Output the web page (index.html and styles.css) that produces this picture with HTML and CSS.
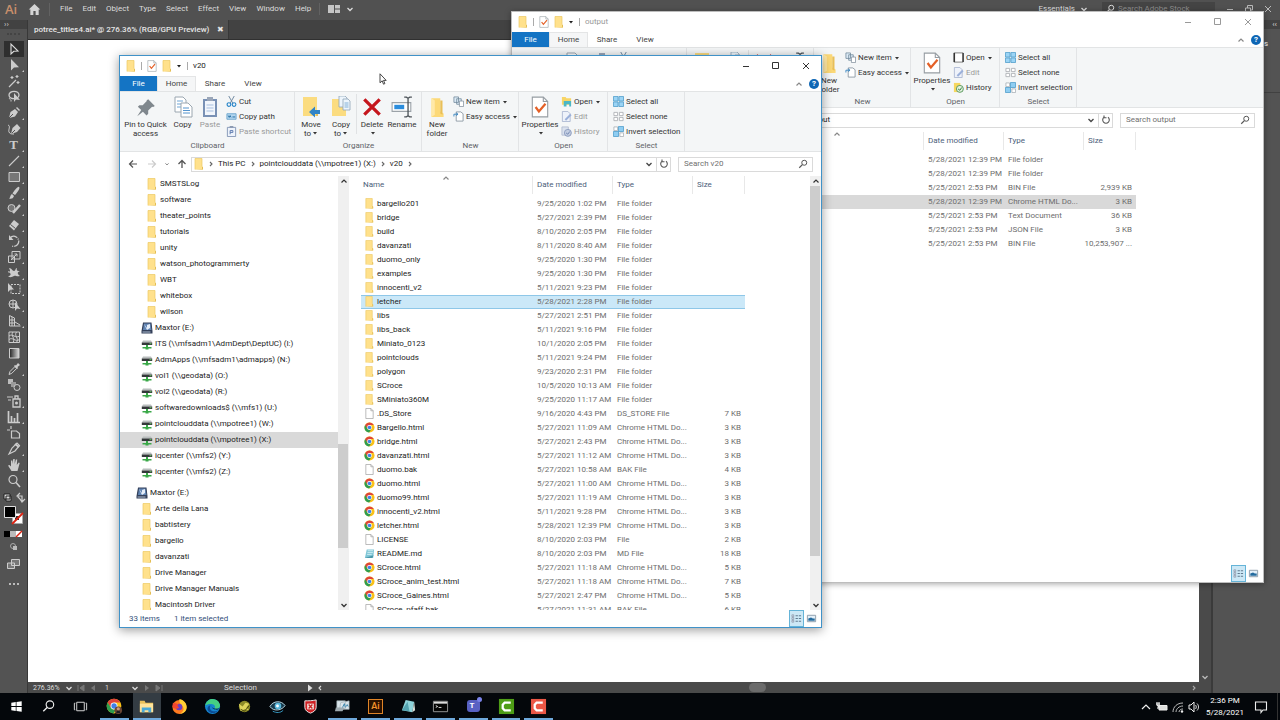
FILE: index.html
```html
<!DOCTYPE html>
<html lang="en">
<head>
<meta charset="utf-8">
<title>Desktop</title>
<link rel="stylesheet" href="styles.css">
</head>
<body>
<svg class="sprite" aria-hidden="true">
  <symbol id="folder" viewBox="0 0 10 12"><path d="M1 0.5h7v8l1 1v2H1z" fill="#ffe18c"/><path d="M1 11.500V.5h7v8" fill="none" stroke="#ecc962" stroke-width=".7"/><path d="M1 11.500h8v-2.300l-1-1v2.800z" fill="#e3bd55"/></symbol>
  <symbol id="file" viewBox="0 0 10 12"><path d="M1 .5h5.500l2.500 2.500v8.500H1z" fill="#fff" stroke="#a2a2a2" stroke-width=".8"/><path d="M6.500.5V3H9" fill="none" stroke="#a2a2a2" stroke-width=".8"/></symbol>
  <symbol id="note" viewBox="0 0 12 12"><path d="M3 1.500h8l-1 9.500H1z" fill="#7fc6d6"/><path d="M4 3h6M3.700 5h6M3.400 7h5" stroke="#d9f2f7" stroke-width=".9"/><path d="M1 11l8-.2 1.500-3" fill="#4a97aa"/></symbol>
  <symbol id="chrome" viewBox="0 0 12 12"><circle cx="6" cy="6" r="5.500" fill="#fbc116"/><path d="M1.200 3.300A5.500 5.500 0 0 1 10.800 3.300H6L3.700 7.400z" fill="#e0443a"/><path d="M1.200 3.300A5.500 5.500 0 0 0 5.600 11.500L8.300 7.300 6 8.700 3.700 7.300z" fill="#2e9d4f"/><circle cx="6" cy="6" r="2.600" fill="#fff"/><circle cx="6" cy="6" r="2" fill="#4080e8"/></symbol>
  <symbol id="drive" viewBox="0 0 12 12"><path d="M2 2.500h8l1.200 2H.8z" fill="#b9bebe"/><path d="M.8 4.500h10.400v2.500H.8z" fill="#34383a"/><path d="M8.500 5.700h2" stroke="#74e66c" stroke-width=".8"/><path d="M5 7h2v2h3.500v1.500H7.500v1h-3v-1h-3V9H5z" fill="#39a847"/></symbol>
  <symbol id="disk" viewBox="0 0 12 12"><path d="M2 .5h8.500l1 8.500v2.500h-11V9z" fill="#34405a"/><path d="M3 1.500h6.500l1 6.500H2z" fill="#6084b3"/><path d="M3 2l3 4V3l3-1v4L6 8z" fill="#e5eefa"/><path d="M1.500 10h8" stroke="#aebdd0"/></symbol>
  <symbol id="check-doc" viewBox="0 0 16 20"><path d="M1 1h10l4 4v14H1z" fill="#fff" stroke="#969da3"/><path d="M11 1v4h4" fill="none" stroke="#969da3"/><path d="M4 10l3 4 6-7" fill="none" stroke="#e46027" stroke-width="2"/></symbol>
  <symbol id="pin" viewBox="0 0 20 20"><path d="M12 3l6 6-1.500 1-1-.3-3.500 3.500v3l-1.500 1.500-3.300-3.300L2 18.500l3.700-5.700L2.600 9.700 4 8.300h3l3.700-3.700L10.500 4z" fill="#7f878d"/></symbol>
  <symbol id="copy" viewBox="0 0 20 22"><path d="M2 1h8l3 3v12H2z" fill="#fff" stroke="#9aa6b0"/><path d="M4 5h6M4 8h6M4 11h6" stroke="#6fa5d5"/><path d="M8 7h7l4 4v10H8z" fill="#fff" stroke="#9aa6b0"/><path d="M10 12h6M10 14.500h7M10 17h7" stroke="#5494ce"/></symbol>
  <symbol id="paste" viewBox="0 0 18 22"><path d="M2 3h14v18H2z" fill="#7991b5"/><path d="M4 5h10v14H4z" fill="#f2f6fc"/><path d="M6 1h6v4H6z" fill="#9aa6b8"/><path d="M5.500 9h7M5.500 12h7M5.500 15h7" stroke="#a7bfdf"/></symbol>
  <symbol id="cut" viewBox="0 0 12 12"><path d="M3 0l4.500 8M9 0L4.500 8" stroke="#67829b" fill="none"/><circle cx="3.200" cy="9.300" r="2" fill="none" stroke="#2584c8" stroke-width="1.200"/><circle cx="8.800" cy="9.300" r="2" fill="none" stroke="#2584c8" stroke-width="1.200"/></symbol>
  <symbol id="copypath" viewBox="0 0 12 12"><path d="M1 3h10v6H1z" fill="#b4d7f0" stroke="#6ba4cd"/><path d="M2.500 5l1 2 1-2 1 2M7 6.500h3" stroke="#19689f" fill="none"/></symbol>
  <symbol id="pastesc" viewBox="0 0 12 12"><path d="M1.500 1.500h9v10h-9z" fill="#eef3fb" stroke="#8295b5"/><path d="M4 0h4v2H4z" fill="#8c9ab2"/><path d="M4.500 9V5h3v2h-3" stroke="#5775ac" fill="none"/></symbol>
  <symbol id="moveto" viewBox="0 0 20 22"><path d="M2 1h14v19H2z" fill="#fbdc80"/><path d="M15 16v4h2v-4z" fill="#e5c05e"/><path d="M8 16l6-5.500v3.500h5v4h-5v3.500z" fill="#3184c6"/></symbol>
  <symbol id="copyto" viewBox="0 0 20 22"><path d="M1 3h14v17H1z" fill="#fbdc80"/><path d="M8 0h6l2 2v9H8z" fill="#edf5fc" stroke="#8fa5b8" stroke-width=".8"/><path d="M12 3h5l2 2v9h-7z" fill="#edf5fc" stroke="#8fa5b8" stroke-width=".8"/><path d="M13.500 7h4M13.500 9h4M13.500 11h4" stroke="#68a0cf" stroke-width=".8"/></symbol>
  <symbol id="delete" viewBox="0 0 20 20"><path d="M3 3l14 14M17 3L3 17" stroke="#c5161d" stroke-width="3"/></symbol>
  <symbol id="rename" viewBox="0 0 20 20"><path d="M1 6h17v8H1z" fill="#fff" stroke="#9ba2a8"/><path d="M3 8h9v4H3z" fill="#2b8ddd"/><path d="M12 1h2l1.500 1L17 1h2M15.500 2v16M12 19h2l1.500-1L17 19h2" fill="none" stroke="#4c5359" stroke-width="1.200"/></symbol>
  <symbol id="bigfolder" viewBox="0 0 16 20"><path d="M3 2h8v12l3 2v3H3z" fill="#fcd978"/><path d="M3 19V2l3 2v13z" fill="#ffe9a8"/><path d="M11 4h2v13l-2-1z" fill="#e9bf58"/></symbol>
  <symbol id="newitem" viewBox="0 0 12 12"><path d="M1 1h5v6H1zM4 3h5v6H4z" fill="#dceaf5" stroke="#698296" stroke-width=".8"/><path d="M7 5.500h4.500v6H7z" fill="#fff" stroke="#7d8c99" stroke-width=".8"/></symbol>
  <symbol id="easy" viewBox="0 0 12 12"><path d="M3.500 1h5l2.500 2v8H3.500z" fill="#fff" stroke="#83909b" stroke-width=".9"/><path d="M1 6V3.500h4M3.500 2L5.500 3.500 3.500 5" fill="none" stroke="#287cbc" stroke-width=".9"/></symbol>
  <symbol id="openf" viewBox="0 0 12 12"><path d="M1 1h4l1 1.500h5v7H1z" fill="#f8d566"/><path d="M3 5.500h8v6H9V9H6v2.500H3z" fill="#4bb7c6"/></symbol>
  <symbol id="openp" viewBox="0 0 12 12"><path d="M1 1h10v10H1z" fill="#fff" stroke="#777"/><path d="M1.500 1v10M11 1v10" stroke="#333" stroke-width="1.500"/></symbol>
  <symbol id="edit" viewBox="0 0 12 12"><path d="M1.500.5h6l2.500 2.500v8.500H1.500z" fill="#eef2fa" stroke="#a6b3ce" stroke-width=".9"/><path d="M4 9l6-6 1.500 1.500-6 6z" fill="#9bb0da"/></symbol>
  <symbol id="history" viewBox="0 0 12 12"><path d="M1 1h7v9H1z" fill="#dbe2ee" stroke="#a9b4cb" stroke-width=".8"/><circle cx="7.500" cy="7.500" r="3.800" fill="#c4cee2" stroke="#8a9abd"/><path d="M5.500 7.500l2 1.500 2-3" stroke="#7084b0" fill="none"/></symbol>
  <symbol id="historyc" viewBox="0 0 12 12"><path d="M1 1h7v10H1z" fill="#f6d75f"/><circle cx="7.500" cy="7.500" r="3.800" fill="#e3f1df" stroke="#55955a"/><path d="M5.500 7.500l2 1.500 2-3" stroke="#247c35" fill="none"/></symbol>
  <symbol id="selall" viewBox="0 0 12 12"><path d="M.5.5h5v5h-5zM6.500.5h5v5h-5zM.5 6.500h5v5h-5zM6.500 6.500h5v5h-5z" fill="#9bd4f5" stroke="#529fcc" stroke-width=".9"/></symbol>
  <symbol id="selnone" viewBox="0 0 12 12"><path d="M1 1.500h4v3.500H1zM7 1.500h4v3.500H7zM1 7h4v3.500H1zM7 7h4v3.500H7z" fill="#fff" stroke="#a9adb1" stroke-width=".9"/></symbol>
  <symbol id="selinv" viewBox="0 0 12 12"><path d="M1 1h4v4H1zM7.500 7.500h4v4h-4z" fill="#fff" stroke="#a0a8b0" stroke-width=".8"/><path d="M6 .5h5.500V6H6zM.5 6H6v5.500H.5z" fill="#8ecdf2" stroke="#529fcc" stroke-width=".9"/></symbol>
  <symbol id="search" viewBox="0 0 12 12"><circle cx="7.500" cy="4.500" r="3" fill="none" stroke="currentColor" stroke-width="1.200"/><path d="M5.300 6.700L1.500 10.500" stroke="currentColor" stroke-width="1.400"/></symbol>
  <symbol id="chev-d" viewBox="0 0 10 10"><path d="M2.500 4L5 6.500 7.500 4" fill="none" stroke="currentColor" stroke-width="1.300"/></symbol>
  <symbol id="chev-u" viewBox="0 0 10 10"><path d="M2.500 6.500L5 4l2.500 2.500" fill="none" stroke="currentColor" stroke-width="1.200"/></symbol>
  <symbol id="chev-r" viewBox="0 0 10 10"><path d="M4 3l2 2-2 2" fill="none" stroke="currentColor" stroke-width="1.100"/></symbol>
  <symbol id="chev-l" viewBox="0 0 10 10"><path d="M6 3L4 5l2 2" fill="none" stroke="currentColor" stroke-width="1.100"/></symbol>
  <symbol id="caret" viewBox="0 0 6 6"><path d="M1 2h4L3 4.500z" fill="currentColor"/></symbol>
  <symbol id="refresh" viewBox="0 0 10 10"><path d="M3 2.300a3.300 3.300 0 1 0 4 0M3 .5v2.200h2.500" fill="none" stroke="#555" stroke-width="1.100"/></symbol>
  <symbol id="left" viewBox="0 0 10 10"><path d="M9 5H1.500M5 1.500L1.500 5 5 8.500" fill="none" stroke="currentColor" stroke-width="1.200"/></symbol>
  <symbol id="right" viewBox="0 0 10 10"><path d="M1 5h7.500M5 1.500L8.500 5 5 8.500" fill="none" stroke="currentColor" stroke-width="1.200"/></symbol>
  <symbol id="up" viewBox="0 0 10 10"><path d="M5 9V1.500M1.500 5L5 1.500 8.500 5" fill="none" stroke="currentColor" stroke-width="1.300"/></symbol>
  <symbol id="min" viewBox="0 0 10 10"><path d="M2 5.500h6" stroke="currentColor"/></symbol>
  <symbol id="max" viewBox="0 0 10 10"><path d="M1.500 1.500h6v6h-6z" fill="none" stroke="currentColor"/></symbol>
  <symbol id="close" viewBox="0 0 10 10"><path d="M2 2l6 6M8 2l-6 6" stroke="currentColor"/></symbol>
  <symbol id="restore" viewBox="0 0 10 10"><path d="M1.500 4h5v4h-5zM3.500 4V1.500h5V6h-2" fill="none" stroke="currentColor"/></symbol>
  <symbol id="details" viewBox="0 0 12 12"><path d="M1 2h2v2H1zM1 5h2v2H1zM1 8h2v2H1z" fill="none" stroke="#889" stroke-width=".7"/><path d="M5 3h2.500M5 6h2.500M5 9h2.500M8.500 3H11M8.500 6H11M8.500 9H11" stroke="#567086"/></symbol>
  <symbol id="thumbs" viewBox="0 0 12 12"><path d="M1.500 2.500h9v7h-9z" fill="#e4f0f9" stroke="#8a9aa8"/><path d="M2.500 6l3-1 2 1h2v2.500h-7z" fill="#246b9e"/></symbol>
</svg>

<main class="desktop">
  <header class="menubar">
    <span class="ai-logo">Ai</span>
    <button class="plain home" aria-label="Home"><svg viewBox="0 0 14 14"><path d="M7 1L.8 7h1.700v6h3.300V8.500h2.400V13h3.300V7h1.700z" fill="#d4d4d4"/></svg></button>
    <nav class="menus"><button>File</button><button>Edit</button><button>Object</button><button>Type</button><button>Select</button><button>Effect</button><button>View</button><button>Window</button><button>Help</button></nav>
    <button class="plain arrange" aria-label="Arrange documents"><svg viewBox="0 0 12 10"><path d="M0 1h6v8H0zM7 1h5v3.500H7zM7 5.500h5V9H7z" fill="#c6c6c6"/></svg><svg class="s10"><use href="#chev-d"/></svg></button>
    <button class="plain essentials">Essentials <svg class="s10"><use href="#chev-d"/></svg></button>
    <label class="stock"><svg class="s10"><use href="#search"/></svg><input type="text" placeholder="Search Adobe Stock" aria-label="Search Adobe Stock"></label>
    <div class="app-controls"><button aria-label="Minimize"><svg class="s10"><use href="#min"/></svg></button><button aria-label="Restore"><svg class="s10"><use href="#restore"/></svg></button><button aria-label="Close"><svg class="s10"><use href="#close"/></svg></button></div>
  </header>

  <div class="workspace">
    <aside class="tools">
      <div class="tools-head">››</div>
      <div class="grip"></div>
      <button class="tool on" aria-label="Selection"><svg viewBox="0 0 14 14"><path d="M4 2v10l2.800-2.700 4.200-.2z" fill="none" stroke="#ddd" stroke-width="1.100"/></svg></button>
      <button class="tool more" aria-label="Direct selection"><svg viewBox="0 0 14 14"><path d="M4 1v11.500l3-3 5-.2z" fill="#ccc"/></svg></button>
      <button class="tool" aria-label="Magic wand"><svg viewBox="0 0 14 14"><path d="M2 13l7-7M5 2v3M3.500 3.500h3M10 1v3M8.500 2.500h3M11 7v3M9.500 8.500h3" stroke="#ccc" stroke-width="1.200"/></svg></button>
      <button class="tool" aria-label="Lasso"><svg viewBox="0 0 14 14"><ellipse cx="7" cy="5" rx="5" ry="3.700" fill="none" stroke="#ccc" stroke-width="1.300"/><path d="M3 7.500c-2 2 2 2 1 4" fill="none" stroke="#ccc"/><path d="M7 3v9l2-2.500 4 .5z" fill="#ccc"/></svg></button>
      <button class="tool more" aria-label="Pen"><svg viewBox="0 0 14 14"><path d="M2 12l1.500-6L8 3l3 3-3 4.500z" fill="#ccc"/><path d="M9 2l1-1 3 3-1 1z" fill="#ccc"/><path d="M2 12l4-4" stroke="#535353"/></svg></button>
      <button class="tool" aria-label="Curvature"><svg viewBox="0 0 14 14"><path d="M4 12l1.500-6L10 2l3.500 4L10 10z" fill="#ccc"/><path d="M4 12l4-4" stroke="#535353"/><path d="M1 3c3 1 0 5 1 7s2 2 5 2" fill="none" stroke="#ccc"/></svg></button>
      <button class="tool more type-tool" aria-label="Type">T</button>
      <button class="tool more" aria-label="Line"><svg viewBox="0 0 14 14"><path d="M2 12L12 2" stroke="#ccc" stroke-width="1.100"/></svg></button>
      <button class="tool more" aria-label="Rectangle"><svg viewBox="0 0 14 14"><path d="M2 2.500h10.500v9H2z" fill="#777" stroke="#ccc"/></svg></button>
      <button class="tool more" aria-label="Paintbrush"><svg viewBox="0 0 14 14"><path d="M12 1c2 1-3 7-4 8L5.500 7.500C7 5 11 0 12 1zM5 8l2 2c-1 3-3 3-5 2.500C3.500 12 3 9 5 8z" fill="#ccc"/></svg></button>
      <button class="tool more" aria-label="Shaper"><svg viewBox="0 0 14 14"><circle cx="4.500" cy="6" r="3.500" fill="#777" stroke="#ccc"/><path d="M6 11l7-8" stroke="#ccc" stroke-width="2.400"/></svg></button>
      <button class="tool more" aria-label="Eraser"><svg viewBox="0 0 14 14"><path d="M2 8l5-6 5 4-5 6.500z" fill="#ccc"/><path d="M3.500 6.500l5 4" stroke="#535353"/></svg></button>
      <button class="tool more" aria-label="Rotate"><svg viewBox="0 0 14 14"><path d="M3 4a5 5 0 1 1 2 8" fill="none" stroke="#ccc" stroke-width="1.300" stroke-dasharray="8 1 1 1"/><path d="M2 1v5h4.500z" fill="#ccc"/></svg></button>
      <button class="tool more" aria-label="Scale"><svg viewBox="0 0 14 14"><path d="M1.500 6h6v6.500h-6zM5 1.500h8V9H5z" fill="none" stroke="#ccc"/><path d="M4 10l6-6M7.500 4H10v2.500" fill="none" stroke="#ccc"/></svg></button>
      <button class="tool more" aria-label="Width"><svg viewBox="0 0 14 14"><path d="M2 2c3 0 3 3 5 3s1-3 3-3c-1 3 1 3 3 3-3 1-3 3 0 5-4 1-4-1-6 0s-4 2-6 0c3 0 3-2 2-3S1 7 1 5c2 1 3 1 1-3z" fill="#ccc"/></svg></button>
      <button class="tool more" aria-label="Free transform"><svg viewBox="0 0 14 14"><path d="M4 2.500h9v9H4z" fill="none" stroke="#ccc" stroke-dasharray="2 1"/><path d="M1 1v9l2.500-2.500H7z" fill="#ccc"/></svg></button>
      <button class="tool more" aria-label="Shape builder"><svg viewBox="0 0 14 14"><circle cx="6" cy="6" r="4" fill="none" stroke="#ccc"/><path d="M2 6h8M6 2v8" stroke="#ccc"/><path d="M8 4v9l2-2.500 3.500.5z" fill="#ccc"/></svg></button>
      <button class="tool more" aria-label="Perspective"><svg viewBox="0 0 14 14"><path d="M2.500 1.500v10.500h11M2.500 1.500l5 2.500v8M5 3v9M2.500 6h5M2.500 9h5M8 8l5 3" fill="none" stroke="#ccc"/></svg></button>
      <button class="tool" aria-label="Mesh"><svg viewBox="0 0 14 14"><path d="M2 2h10.500v10.500H2zM2 6c4-3 6 3 10.500 0M2 9.500c4-3 6 3 10.500 0M6 2c-3 4 3 6 0 10.500M9.500 2c-3 4 3 6 0 10.500" fill="none" stroke="#ccc"/></svg></button>
      <button class="tool" aria-label="Gradient"><svg viewBox="0 0 14 14"><linearGradient id="g"><stop stop-color="#222"/><stop offset="1" stop-color="#ddd"/></linearGradient><path d="M2.500 2.500h9.500v9.500H2.500z" fill="url(#g)" stroke="#ccc"/></svg></button>
      <button class="tool more" aria-label="Eyedropper"><svg viewBox="0 0 14 14"><path d="M2 12.500l1-3 5-5 1.800 1.800-5 5z" fill="none" stroke="#ccc"/><path d="M7 4l1-1 1 .5L11 1l2 2-2.500 2 .5 1-1 1z" fill="#ccc"/></svg></button>
      <button class="tool" aria-label="Blend"><svg viewBox="0 0 14 14"><path d="M1 1h5v5H1z" fill="#bbb"/><path d="M4 4h5v5H4z" fill="#999"/><circle cx="10" cy="9.500" r="3" fill="#555" stroke="#ccc"/></svg></button>
      <button class="tool more" aria-label="Symbol sprayer"><svg viewBox="0 0 14 14"><path d="M6 5h7v8H6zM8 2h3v3H8z" fill="none" stroke="#ccc" stroke-width="1.300"/><circle cx="9.500" cy="9" r="1.500" fill="#ccc"/><path d="M0 3h6M1 6h3" stroke="#ccc"/></svg></button>
      <button class="tool more" aria-label="Graph"><svg viewBox="0 0 14 14"><path d="M1.500 1v11.500H13M4.500 12V6M7.500 12V8M10.500 12V3" fill="none" stroke="#ccc" stroke-width="1.700"/></svg></button>
      <button class="tool" aria-label="Artboard"><svg viewBox="0 0 14 14"><path d="M4.500 5h5l3 2.500V12h-8zM0 4h3M4 0v3" fill="none" stroke="#ccc" stroke-width="1.200"/></svg></button>
      <button class="tool more" aria-label="Slice"><svg viewBox="0 0 14 14"><path d="M2 12l3-6 5-5 2.500 2.500L8 9z" fill="none" stroke="#ccc" stroke-width="1.200"/><path d="M8 2l4 3" stroke="#ccc" stroke-width="2"/></svg></button>
      <button class="tool more" aria-label="Hand"><svg viewBox="0 0 14 14"><path d="M4.500 13L1 7.500l1.500-.5L4 8.500V2.500h1.300V6L6.300 1h1.400v5l1.200-4.500h1.300L9.800 7l1.900-2.500 1 .5L10.500 13z" fill="#ccc"/></svg></button>
      <button class="tool" aria-label="Zoom"><svg viewBox="0 0 14 14"><circle cx="6" cy="5.500" r="4" fill="none" stroke="#ccc" stroke-width="1.200"/><path d="M9 8.500l4 4.500" stroke="#ccc" stroke-width="1.600"/></svg></button>
      <svg class="swatches" viewBox="0 0 28 100"><path d="M4 5h6v5H4zM6 7h5v5H6z" fill="#ddd" stroke="#222"/><path d="M18 7h4v6M20 4l-3 3 3 3M20 10l2 3 3-3" fill="none" stroke="#ccc" stroke-width="1.200"/><path d="M12.500 24.500h10v10h-10z" fill="#fff" stroke="#aaa"/><path d="M15 27h4v4h-4z" fill="#333"/><path d="M12 35l11-11" stroke="#d21" stroke-width="1.800"/><path d="M4.500 17.500h11v11h-11z" fill="#000" stroke="#ddd"/><path d="M4 42h6v6H4z" fill="#000"/><path d="M10 42h6v6h-6z" fill="#bbb"/><path d="M16 42h6v6h-6z" fill="#fff"/><path d="M16 48l6-6" stroke="#d21" stroke-width="1.500"/><circle cx="13" cy="57" r="2.500" fill="none" stroke="#aaa"/><path d="M13 57h4v4h-4z" fill="#bbb"/><path d="M7.500 74h7v5.500h-7zM11.500 70.500h8v6h-8z" fill="#777" stroke="#ccc"/><path d="M9 95h2M13 95h2M17 95h2" stroke="#bbb" stroke-width="2"/></svg>
    </aside>

    <section class="document">
      <div class="tabstrip"><div class="doc-tab">potree_titles4.ai* @ 276.36% (RGB/GPU Preview)<button aria-label="Close document">✖</button></div></div>
      <div class="canvas-row"><div class="canvas"></div><div class="vscroll"><svg class="s10"><use href="#chev-d"/></svg></div></div>
      <footer class="statusbar">
        <span class="zoomval">276.36%</span><svg class="s10"><use href="#chev-d"/></svg>
        <svg class="s10 dim" viewBox="0 0 10 10"><path d="M2 2v6M8 2L4 5l4 3z" fill="#777" stroke="#777"/></svg><svg class="s10 dim" viewBox="0 0 10 10"><path d="M7 2L3 5l4 3z" fill="#777"/></svg>
        <span class="page-no">1</span><svg class="s10"><use href="#chev-d"/></svg>
        <svg class="s10 dim" viewBox="0 0 10 10"><path d="M3 2l4 3-4 3z" fill="#777"/></svg><svg class="s10 dim" viewBox="0 0 10 10"><path d="M8 2v6M2 2l4 3-4 3z" fill="#777" stroke="#777"/></svg>
        <span class="mode">Selection</span><svg class="s10 play" viewBox="0 0 10 10"><path d="M3 1.500L7.500 5 3 8.500z" fill="#ddd"/></svg><svg class="s10"><use href="#chev-l"/></svg>
        <span class="hthumb-wrap"><span class="hthumb"></span></span><svg class="s10 end"><use href="#chev-r"/></svg>
      </footer>
    </section>

    <aside class="panel"><div class="panel-head">‹‹</div><div class="panel-body"><span>s</span></div></aside>
  </div>

  <nav class="taskbar">
    <div class="system">
      <button aria-label="Start"><svg viewBox="0 0 18 18"><path d="M3.500 5l4.700-.7v4.300H3.500zM9 4.200l5.500-.8v5.200H9zM3.500 9.400h4.700v4.300L3.500 13zM9 9.400h5.500v5.200L9 13.800z" fill="#fff"/></svg></button>
      <button aria-label="Search"><svg viewBox="0 0 18 18"><circle cx="10.500" cy="7" r="4" fill="none" stroke="#eee" stroke-width="1.200"/><path d="M7.500 10L3.500 14" stroke="#eee" stroke-width="1.400"/></svg></button>
      <button aria-label="Task view"><svg viewBox="0 0 18 18"><path d="M5 4.500h8v9H5zM3.500 5.500h-1v7h1M14.500 5.500h1v7h-1" fill="none" stroke="#ddd"/></svg></button>
    </div>
    <div class="apps">
      <button class="run" aria-label="Chrome"><svg viewBox="0 0 18 18"><svg width="17" height="17"><use href="#chrome"/></svg><circle cx="13" cy="13" r="4" fill="#6b4634"/><path d="M11 16c0-4 4-4 4 0z" fill="#1c1c22"/><circle cx="13" cy="11.500" r="1.700" fill="#c99a7d"/></svg></button>
      <button class="run active" aria-label="File Explorer"><svg viewBox="0 0 18 18"><path d="M2 3h5l1 2h8v10H2z" fill="#e9c15c"/><path d="M2 6h14v9H2z" fill="#ffe39a"/><path d="M4 10h10v5h-3v-2H7v2H4z" fill="#49a9d8"/></svg></button>
      <button aria-label="Firefox"><svg viewBox="0 0 18 18"><circle cx="9" cy="9.500" r="7.500" fill="#ff7a1f"/><path d="M9 1c5 1 9 6 7.300 11-1 3-4 4.800-7 4.800 4-2 5-5 3-8S8 5 9 1z" fill="#ffcf35"/><circle cx="8.500" cy="9.500" r="3.500" fill="#6a3fc4"/><path d="M2 5c2 0 4 1 6.500 2-2 0-2 2 0 3-2 2-6 2-7-1z" fill="#f4462f"/></svg></button>
      <button aria-label="Edge"><svg viewBox="0 0 18 18"><circle cx="9" cy="9" r="8" fill="#1684cf"/><path d="M1.200 8C2.500 3 6 1 9 1c5 0 8 4 8 7 0 3-4 4-6 3 1-1 1-4-2-4.500-3-.4-6.500.5-7.800 1.500z" fill="#45cf83"/><path d="M7 8c-2 3 0 7 6 6l2-1c-2 4-9 4-11 0-1-3 1-5 3-5z" fill="#0b4c96"/><path d="M8.500 8c-1 2 2 4.500 8 3-2 2-9 1.500-8-3z" fill="#020a10"/></svg></button>
      <button aria-label="Globe"><svg viewBox="0 0 18 18"><circle cx="9" cy="9" r="6" fill="#8c8a28"/><path d="M3 6l4 3 3-4 4 1-3 4 3 3-5-1-4 2z" fill="#ded45c"/><path d="M5 12l4 2 5-6" stroke="#45430b" fill="none"/></svg></button>
      <button aria-label="Viewer"><svg viewBox="0 0 18 18"><path d="M1 9c3-6 12-7 16-1-3 5-12 7-16 1z" fill="#17394c" stroke="#bcdbe7"/><circle cx="9.500" cy="8.500" r="3.500" fill="#58b7dc"/><circle cx="9" cy="8.500" r="1.500" fill="#fff"/><path d="M4 14c4 2 8 2 11-1" stroke="#389ac5" fill="none"/></svg></button>
      <button aria-label="Shield"><svg viewBox="0 0 18 18"><path d="M3 3c4 0 8 0 12-1v8c0 3-3 5-6 6-3-1-6-3-6-6z" fill="#ce2024" stroke="#eee"/><path d="M5.500 6h7v6h-7z" fill="#f3e8e3"/><path d="M7 7l4 4M11 7l-4 4" stroke="#c22" stroke-width="1.500"/></svg></button>
      <button class="run" aria-label="Notes"><svg viewBox="0 0 18 18"><path d="M3 3h9v8H3zM7 5l9-2v9H6z" fill="#dbe6ec" stroke="#a0aeb5" stroke-width=".7"/><path d="M2 10h9l-2 4H1z" fill="#9eaab0"/><path d="M9 10l2-4 1 4M13 9l1-2 1 2" stroke="#3382aa" fill="none"/></svg></button>
      <button class="run" aria-label="Illustrator"><span class="ai-tile">Ai</span></button>
      <button class="run" aria-label="Notepad"><svg viewBox="0 0 18 18"><path d="M6 2l9 2-2 11-11-2z" fill="#8ed3da"/><path d="M13 15l3-2-1-9z" fill="#d8dfd8"/><path d="M2 13l6-9 2 10z" fill="#53a3b0"/></svg></button>
      <button class="run" aria-label="Command Prompt"><svg viewBox="0 0 18 18"><path d="M1.500 3.500h15v11h-15z" fill="#050505" stroke="#999"/><path d="M2 4h14v2H2z" fill="#ddd"/><path d="M4 8l2 1-2 1M7 10h3" stroke="#ddd" fill="none"/></svg></button>
      <button class="run" aria-label="Teams"><span class="teams">T</span></button>
      <button class="run" aria-label="Camtasia"><svg viewBox="0 0 18 18"><path d="M1 1h16v16H1z" fill="#4e9d16"/><path d="M13.500 5H7L5 7v4l2 2h6.500" fill="none" stroke="#fff" stroke-width="2.400"/></svg></button>
      <button class="run" aria-label="Recorder"><svg viewBox="0 0 18 18"><path d="M1 1h16v16H1z" fill="#ec5746"/><path d="M13.500 5H7L5 7v4l2 2h6.500" fill="none" stroke="#fff" stroke-width="2.400"/></svg></button>
    </div>
    <div class="tray">
      <button aria-label="Show hidden icons"><svg viewBox="0 0 12 12"><path d="M2 8l4-4 4 4" fill="none" stroke="#eee" stroke-width="1.200"/></svg></button>
      <button aria-label="Battery"><svg viewBox="0 0 12 12"><path d="M3 4.500h8v4.500H3z" fill="#ddd" stroke="#eee"/><path d="M0 3h4M1 1v3l2 2V1M2 6v2" fill="none" stroke="#eee" stroke-width="1.200"/></svg></button>
      <button aria-label="Network"><svg viewBox="0 0 12 12"><path d="M1 11C1 6 5 2 11 2M4 11c0-3 3-6 7-6M7 11c0-2 2-3 4-3" fill="none" stroke="#bbb"/><circle cx="10" cy="10.500" r="1.200" fill="#eee"/></svg></button>
      <button aria-label="Volume"><svg viewBox="0 0 12 12"><path d="M1 4h2l3-3v10L3 8H1z" fill="none" stroke="#eee"/><path d="M7.500 4c1 1 1 3 0 4M9 2.500c2 2 2 5 0 7" fill="none" stroke="#ddd"/></svg></button>
      <time class="clock">2:36 PM<br>5/28/2021</time>
      <button class="notif" aria-label="Notifications"><svg viewBox="0 0 14 14"><path d="M1.500 2h11v8H9l-2 2.500V10H1.500z" fill="none" stroke="#eee" stroke-width="1.100"/></svg></button>
    </div>
  </nav>

  <section class="window back">
    <div class="titlebar"><svg class="f"><use href="#folder"/></svg><i></i><svg class="f"><use href="#check-doc"/></svg><svg class="f"><use href="#folder"/></svg><svg class="s6"><use href="#caret"/></svg><i></i><h2>output</h2><div class="controls"><button aria-label="Minimize"><svg class="s10"><use href="#min"/></svg></button><button aria-label="Maximize"><svg class="s10"><use href="#max"/></svg></button><button aria-label="Close"><svg class="s10"><use href="#close"/></svg></button></div></div>
    <div class="tabs"><button class="filetab">File</button><button class="on">Home</button><button>Share</button><button>View</button><span class="help"><svg class="s10"><use href="#chev-u"/></svg><b>?</b></span></div>
    <div class="ribbon">
      <div class="group clip"><div class="items"><button class="big w49"><svg><use href="#pin"/></svg>Pin to Quick<br>access</button><button class="big w25"><svg><use href="#copy"/></svg>Copy</button><button class="big w30"><svg><use href="#paste"/></svg>Paste</button><div class="col"><button><svg><use href="#cut"/></svg>Cut</button><button><svg><use href="#copypath"/></svg>Copy path</button><button><svg><use href="#pastesc"/></svg>Paste shortcut</button></div></div><p>Clipboard</p></div>
      <div class="group org"><div class="items"><button class="big w30"><svg><use href="#moveto"/></svg>Move<br>to</button><button class="big w30"><svg><use href="#copyto"/></svg>Copy<br>to</button><i></i><button class="big w30"><svg><use href="#delete"/></svg>Delete</button><button class="big w30"><svg><use href="#rename"/></svg>Rename</button></div><p>Organize</p></div>
      <div class="group new"><div class="items"><button class="big w30"><svg><use href="#bigfolder"/></svg>New<br>folder</button><div class="col"><button><svg><use href="#newitem"/></svg>New item<svg class="s6"><use href="#caret"/></svg></button><button><svg><use href="#easy"/></svg>Easy access<svg class="s6"><use href="#caret"/></svg></button></div></div><p>New</p></div>
      <div class="group opn"><div class="items"><button class="big w40"><svg><use href="#check-doc"/></svg>Properties<br><svg class="s6"><use href="#caret"/></svg></button><div class="col"><button><svg><use href="#openp"/></svg>Open<svg class="s6"><use href="#caret"/></svg></button><button class="off"><svg><use href="#edit"/></svg>Edit</button><button><svg><use href="#historyc"/></svg>History</button></div></div><p>Open</p></div>
      <div class="group sel"><div class="items"><div class="col"><button><svg><use href="#selall"/></svg>Select all</button><button><svg><use href="#selnone"/></svg>Select none</button><button><svg><use href="#selinv"/></svg>Invert selection</button></div></div><p>Select</p></div>
    </div>
    <div class="address"><div class="arrows"></div><div class="crumbs"><span class="tail">output</span><svg class="s10 drop"><use href="#chev-d"/></svg><button class="reload" aria-label="Refresh"><svg class="s10"><use href="#refresh"/></svg></button></div><label class="find"><input type="text" placeholder="Search output" aria-label="Search output"><svg class="s10"><use href="#search"/></svg></label></div>
    <div class="content">
      <div class="nav"></div>
      <div class="list">
        <table>
          <colgroup><col class="c-name"><col class="c-date"><col class="c-type"><col class="c-size"></colgroup>
          <thead><tr><th><svg class="s10 sort"><use href="#chev-u"/></svg>Name</th><th>Date modified</th><th>Type</th><th>Size</th></tr></thead>
          <tbody>
            <tr><td></td><td>5/28/2021 12:39 PM</td><td>File folder</td><td></td></tr>
            <tr><td></td><td>5/28/2021 12:39 PM</td><td>File folder</td><td></td></tr>
            <tr><td></td><td>5/25/2021 2:53 PM</td><td>BIN File</td><td>2,939 KB</td></tr>
            <tr class="picked"><td></td><td>5/28/2021 12:39 PM</td><td>Chrome HTML Do...</td><td>3 KB</td></tr>
            <tr><td></td><td>5/25/2021 2:53 PM</td><td>Text Document</td><td>36 KB</td></tr>
            <tr><td></td><td>5/25/2021 2:53 PM</td><td>JSON File</td><td>3 KB</td></tr>
            <tr><td></td><td>5/25/2021 2:53 PM</td><td>BIN File</td><td>10,253,907 ...</td></tr>
          </tbody>
        </table>
      </div>
    </div>
    <div class="status"><div class="views"><button class="on" aria-label="Details"><svg><use href="#details"/></svg></button><button aria-label="Thumbnails"><svg><use href="#thumbs"/></svg></button></div></div>
  </section>

  <section class="window front">
    <div class="titlebar"><svg class="f"><use href="#folder"/></svg><i></i><svg class="f"><use href="#check-doc"/></svg><svg class="f"><use href="#folder"/></svg><svg class="s6"><use href="#caret"/></svg><i></i><h2>v20</h2><div class="controls"><button aria-label="Minimize"><svg class="s10"><use href="#min"/></svg></button><button aria-label="Maximize"><svg class="s10"><use href="#max"/></svg></button><button aria-label="Close"><svg class="s10"><use href="#close"/></svg></button></div></div>
    <div class="tabs"><button class="filetab">File</button><button class="on">Home</button><button>Share</button><button>View</button><span class="help"><svg class="s10"><use href="#chev-u"/></svg><b>?</b></span></div>
    <div class="ribbon">
      <div class="group clip"><div class="items"><button class="big w49"><svg><use href="#pin"/></svg>Pin to Quick<br>access</button><button class="big w25"><svg><use href="#copy"/></svg>Copy</button><button class="big w30 off"><svg><use href="#paste"/></svg>Paste</button><div class="col"><button><svg><use href="#cut"/></svg>Cut</button><button><svg><use href="#copypath"/></svg>Copy path</button><button class="off"><svg><use href="#pastesc"/></svg>Paste shortcut</button></div></div><p>Clipboard</p></div>
      <div class="group org"><div class="items"><button class="big w30"><svg><use href="#moveto"/></svg>Move<br>to<svg class="s6"><use href="#caret"/></svg></button><button class="big w30"><svg><use href="#copyto"/></svg>Copy<br>to<svg class="s6"><use href="#caret"/></svg></button><i></i><button class="big w30"><svg><use href="#delete"/></svg>Delete<br><svg class="s6"><use href="#caret"/></svg></button><button class="big w30"><svg><use href="#rename"/></svg>Rename</button></div><p>Organize</p></div>
      <div class="group new"><div class="items"><button class="big w30"><svg><use href="#bigfolder"/></svg>New<br>folder</button><div class="col"><button><svg><use href="#newitem"/></svg>New item<svg class="s6"><use href="#caret"/></svg></button><button><svg><use href="#easy"/></svg>Easy access<svg class="s6"><use href="#caret"/></svg></button></div></div><p>New</p></div>
      <div class="group opn"><div class="items"><button class="big w40"><svg><use href="#check-doc"/></svg>Properties<br><svg class="s6"><use href="#caret"/></svg></button><div class="col"><button><svg><use href="#openf"/></svg>Open<svg class="s6"><use href="#caret"/></svg></button><button class="off"><svg><use href="#edit"/></svg>Edit</button><button class="off"><svg><use href="#history"/></svg>History</button></div></div><p>Open</p></div>
      <div class="group sel"><div class="items"><div class="col"><button><svg><use href="#selall"/></svg>Select all</button><button><svg><use href="#selnone"/></svg>Select none</button><button><svg><use href="#selinv"/></svg>Invert selection</button></div></div><p>Select</p></div>
    </div>
    <div class="address">
      <div class="arrows"><button aria-label="Back"><svg class="s10"><use href="#left"/></svg></button><button class="off" aria-label="Forward"><svg class="s10"><use href="#right"/></svg></button><button class="small" aria-label="Recent"><svg class="s6"><use href="#chev-d"/></svg></button><button aria-label="Up"><svg class="s10"><use href="#up"/></svg></button></div>
      <div class="crumbs"><svg class="f"><use href="#folder"/></svg><svg class="s10"><use href="#chev-r"/></svg><span>This PC</span><svg class="s10"><use href="#chev-r"/></svg><span>pointclouddata (\\mpotree1) (X:)</span><svg class="s10"><use href="#chev-r"/></svg><span>v20</span><svg class="s10"><use href="#chev-r"/></svg><svg class="s10 drop"><use href="#chev-d"/></svg><button class="reload" aria-label="Refresh"><svg class="s10"><use href="#refresh"/></svg></button></div>
      <label class="find"><input type="text" placeholder="Search v20" aria-label="Search v20"><svg class="s10"><use href="#search"/></svg></label>
    </div>
    <div class="content">
      <ul class="nav">
        <li class="deep"><svg><use href="#folder"/></svg>SMSTSLog</li>
        <li class="deep"><svg><use href="#folder"/></svg>software</li>
        <li class="deep"><svg><use href="#folder"/></svg>theater_points</li>
        <li class="deep"><svg><use href="#folder"/></svg>tutorials</li>
        <li class="deep"><svg><use href="#folder"/></svg>unity</li>
        <li class="deep"><svg><use href="#folder"/></svg>watson_photogrammerty</li>
        <li class="deep"><svg><use href="#folder"/></svg>WBT</li>
        <li class="deep"><svg><use href="#folder"/></svg>whitebox</li>
        <li class="deep"><svg><use href="#folder"/></svg>wilson</li>
        <li><svg><use href="#disk"/></svg>Maxtor (E:)</li>
        <li><svg><use href="#drive"/></svg>ITS (\\mfsadm1\AdmDept\DeptUC) (I:)</li>
        <li><svg><use href="#drive"/></svg>AdmApps (\\mfsadm1\admapps) (N:)</li>
        <li><svg><use href="#drive"/></svg>vol1 (\\geodata) (O:)</li>
        <li><svg><use href="#drive"/></svg>vol2 (\\geodata) (R:)</li>
        <li><svg><use href="#drive"/></svg>softwaredownloads$ (\\mfs1) (U:)</li>
        <li><svg><use href="#drive"/></svg>pointclouddata (\\mpotree1) (W:)</li>
        <li class="current"><svg><use href="#drive"/></svg>pointclouddata (\\mpotree1) (X:)</li>
        <li><svg><use href="#drive"/></svg>iqcenter (\\mfs2) (Y:)</li>
        <li><svg><use href="#drive"/></svg>iqcenter (\\mfs2) (Z:)</li>
        <li class="root"><svg><use href="#disk"/></svg>Maxtor (E:)</li>
        <li><svg><use href="#folder"/></svg>Arte della Lana</li>
        <li><svg><use href="#folder"/></svg>babtistery</li>
        <li><svg><use href="#folder"/></svg>bargello</li>
        <li><svg><use href="#folder"/></svg>davanzati</li>
        <li><svg><use href="#folder"/></svg>Drive Manager</li>
        <li><svg><use href="#folder"/></svg>Drive Manager Manuals</li>
        <li><svg><use href="#folder"/></svg>Macintosh Driver</li>
      </ul>
      <div class="bar"><svg class="s10"><use href="#chev-u"/></svg><div class="track tree-track"><span></span></div><svg class="s10"><use href="#chev-d"/></svg></div>
      <div class="list">
        <table>
          <colgroup><col class="c-name"><col class="c-date"><col class="c-type"><col class="c-size"></colgroup>
          <thead><tr><th><svg class="s10 sort"><use href="#chev-u"/></svg>Name</th><th>Date modified</th><th>Type</th><th>Size</th></tr></thead>
          <tbody>
            <tr><td><svg><use href="#folder"/></svg>bargello201</td><td>9/25/2020 1:02 PM</td><td>File folder</td><td></td></tr>
            <tr><td><svg><use href="#folder"/></svg>bridge</td><td>5/27/2021 2:39 PM</td><td>File folder</td><td></td></tr>
            <tr><td><svg><use href="#folder"/></svg>build</td><td>8/10/2020 2:05 PM</td><td>File folder</td><td></td></tr>
            <tr><td><svg><use href="#folder"/></svg>davanzati</td><td>8/11/2020 8:40 AM</td><td>File folder</td><td></td></tr>
            <tr><td><svg><use href="#folder"/></svg>duomo_only</td><td>9/25/2020 1:30 PM</td><td>File folder</td><td></td></tr>
            <tr><td><svg><use href="#folder"/></svg>examples</td><td>9/25/2020 1:30 PM</td><td>File folder</td><td></td></tr>
            <tr><td><svg><use href="#folder"/></svg>innocenti_v2</td><td>5/11/2021 9:23 PM</td><td>File folder</td><td></td></tr>
            <tr class="picked"><td><svg><use href="#folder"/></svg>letcher</td><td>5/28/2021 2:28 PM</td><td>File folder</td><td></td></tr>
            <tr><td><svg><use href="#folder"/></svg>libs</td><td>5/27/2021 2:51 PM</td><td>File folder</td><td></td></tr>
            <tr><td><svg><use href="#folder"/></svg>libs_back</td><td>5/11/2021 9:16 PM</td><td>File folder</td><td></td></tr>
            <tr><td><svg><use href="#folder"/></svg>Miniato_0123</td><td>10/1/2020 2:05 PM</td><td>File folder</td><td></td></tr>
            <tr><td><svg><use href="#folder"/></svg>pointclouds</td><td>5/11/2021 9:24 PM</td><td>File folder</td><td></td></tr>
            <tr><td><svg><use href="#folder"/></svg>polygon</td><td>9/23/2020 2:31 PM</td><td>File folder</td><td></td></tr>
            <tr><td><svg><use href="#folder"/></svg>SCroce</td><td>10/5/2020 10:13 AM</td><td>File folder</td><td></td></tr>
            <tr><td><svg><use href="#folder"/></svg>SMiniato360M</td><td>9/25/2020 11:17 AM</td><td>File folder</td><td></td></tr>
            <tr><td><svg><use href="#file"/></svg>.DS_Store</td><td>9/16/2020 4:43 PM</td><td>DS_STORE File</td><td>7 KB</td></tr>
            <tr><td><svg><use href="#chrome"/></svg>Bargello.html</td><td>5/27/2021 11:09 AM</td><td>Chrome HTML Do...</td><td>3 KB</td></tr>
            <tr><td><svg><use href="#chrome"/></svg>bridge.html</td><td>5/27/2021 2:43 PM</td><td>Chrome HTML Do...</td><td>3 KB</td></tr>
            <tr><td><svg><use href="#chrome"/></svg>davanzati.html</td><td>5/27/2021 11:12 AM</td><td>Chrome HTML Do...</td><td>3 KB</td></tr>
            <tr><td><svg><use href="#file"/></svg>duomo.bak</td><td>5/27/2021 10:58 AM</td><td>BAK File</td><td>4 KB</td></tr>
            <tr><td><svg><use href="#chrome"/></svg>duomo.html</td><td>5/27/2021 11:00 AM</td><td>Chrome HTML Do...</td><td>3 KB</td></tr>
            <tr><td><svg><use href="#chrome"/></svg>duomo99.html</td><td>5/27/2021 11:19 AM</td><td>Chrome HTML Do...</td><td>3 KB</td></tr>
            <tr><td><svg><use href="#chrome"/></svg>innocenti_v2.html</td><td>5/11/2021 9:28 PM</td><td>Chrome HTML Do...</td><td>3 KB</td></tr>
            <tr><td><svg><use href="#chrome"/></svg>letcher.html</td><td>5/28/2021 12:39 PM</td><td>Chrome HTML Do...</td><td>3 KB</td></tr>
            <tr><td><svg><use href="#file"/></svg>LICENSE</td><td>8/10/2020 2:03 PM</td><td>File</td><td>2 KB</td></tr>
            <tr><td><svg><use href="#note"/></svg>README.md</td><td>8/10/2020 2:03 PM</td><td>MD File</td><td>18 KB</td></tr>
            <tr><td><svg><use href="#chrome"/></svg>SCroce.html</td><td>5/27/2021 11:18 AM</td><td>Chrome HTML Do...</td><td>5 KB</td></tr>
            <tr><td><svg><use href="#chrome"/></svg>SCroce_anim_test.html</td><td>5/27/2021 11:18 AM</td><td>Chrome HTML Do...</td><td>7 KB</td></tr>
            <tr><td><svg><use href="#chrome"/></svg>SCroce_Gaines.html</td><td>5/27/2021 2:47 PM</td><td>Chrome HTML Do...</td><td>5 KB</td></tr>
            <tr><td><svg><use href="#file"/></svg>SCroce_pfaff.bak</td><td>5/27/2021 11:31 AM</td><td>BAK File</td><td>6 KB</td></tr>
          </tbody>
        </table>
      </div>
      <div class="bar"><svg class="s10"><use href="#chev-u"/></svg><div class="track file-track"><span></span></div><svg class="s10"><use href="#chev-d"/></svg></div>
    </div>
    <div class="status"><span>33 items</span><span>1 item selected</span><div class="views"><button class="on" aria-label="Details"><svg><use href="#details"/></svg></button><button aria-label="Thumbnails"><svg><use href="#thumbs"/></svg></button></div></div>
  </section>

  <svg class="cursor" viewBox="0 0 8 12"><path d="M1 .8v9l2.200-2 1.300 3.400 1.400-.6-1.400-3.200h2.700z" fill="#fff" stroke="#333" stroke-width=".9"/></svg>
</main>
</body>
</html>
```
FILE: styles.css
```css
* { box-sizing: border-box; }
body { margin: 0; font: 8px/12px Roboto, "Open Sans", sans-serif; color: #1c1c1c; overflow: hidden; }
button, input { font: inherit; color: inherit; background: none; border: 0; padding: 0; margin: 0; }
button { white-space: nowrap; }
input { outline: 0; min-width: 0; }
svg { display: block; flex: none; }
.sprite { position: absolute; width: 0; height: 0; }
.s10 { width: 10px; height: 10px; }
.s6 { width: 6px; height: 6px; }
.f { width: 10px; height: 12px; }

.desktop { position: relative; display: flex; flex-direction: column; height: 100vh; background: #535353; }

/* Illustrator menu bar */
.menubar { display: flex; align-items: center; height: 20px; flex: none; color: #dcdcdc; padding: 0 7px 2px 5px; background: #515151; }
.ai-logo { font: 600 13px/16px "Open Sans", sans-serif; color: #c98f6b; width: 23px; }
.home { padding-right: 8px; border-right: 1px solid #626262; }
.home svg { width: 13px; height: 13px; }
.menus { display: flex; gap: 10px; padding: 0 8px 0 10px; border-right: 1px solid #626262; }
.arrange { display: flex; gap: 5px; padding-left: 8px; }
.arrange svg:first-child { width: 12px; height: 10px; }
.essentials { display: flex; gap: 4px; align-items: center; margin-left: auto; padding-right: 13px; }
.stock { display: flex; align-items: center; gap: 3px; width: 113px; height: 14px; padding-left: 3px; background: #444; }
.stock input { flex: 1; }
.stock input::placeholder { color: #8c8c8c; opacity: 1; }
.app-controls { display: flex; gap: 9px; margin-left: 10px; color: #bbb; }

.workspace { display: flex; flex: 1; min-height: 0; }
.tools { width: 28px; flex: none; display: flex; flex-direction: column; align-items: center; background: #535353; border-right: 1px solid #383838; overflow: hidden; }
.tools-head { align-self: stretch; height: 9px; background: #424242; color: #ccc; line-height: 9px; padding-left: 4px; flex: none; }
.grip { width: 13px; height: 4px; margin: 2px 0 6px; border-bottom: 2px dotted #444; flex: none; }
.tool { position: relative; width: 20px; height: 16px; flex: none; display: flex; justify-content: center; align-items: center; color: #ccc; }
.tool svg { width: 14px; height: 14px; }
.tool.on { background: #2f2f2f; }
.tool.more::after { content: ""; position: absolute; right: 0; bottom: 1px; border: 1px solid #ccc; border-top-color: transparent; border-left-color: transparent; }
.type-tool { font: bold 13px "Liberation Serif", serif; }
.swatches { width: 28px; height: 100px; }

.document { flex: 1; min-width: 0; display: flex; flex-direction: column; }
.tabstrip { height: 20px; flex: none; display: flex; background: #424242; border-bottom: 1px solid #303030; }
.doc-tab { display: flex; align-items: center; gap: 8px; padding: 0 4px 0 6px; background: #515151; color: #e6e6e6; font-weight: 500; border-right: 1px solid #383838; }
.canvas-row { flex: 1; display: flex; min-height: 0; }
.canvas { flex: 1; background: #fff; }
.vscroll { width: 12px; display: flex; align-items: flex-end; padding: 0 1px 0; background: #4a4a4a; color: #bbb; }
.statusbar { height: 11px; flex: none; display: flex; align-items: center; background: #4a4a4a; color: #ddd; padding-left: 5px; line-height: 10px; font-size: 7px; }
.zoomval { width: 31px; }
.dim { margin-left: 2px; }
.page-no { width: 25px; margin-left: 7px; }
.mode { margin-left: 60px; width: 81px; }
.statusbar .mode { font-size: 8px; }
.hthumb-wrap { flex: 1; display: flex; justify-content: center; }
.hthumb { width: 17px; height: 9px; border-radius: 5px; background: #6b6b6b; }
.end { margin-right: 12px; color: #aaa; }

.panel { width: 69px; flex: none; border-left: 2px solid #3a3a3a; color: #ddd; }
.panel-head { height: 9px; background: #424242; text-align: right; padding-right: 3px; line-height: 9px; }
.panel-body { height: 64px; border-bottom: 1px solid #414141; padding: 9px 12px 0; text-align: right; font-weight: 600; }

/* Taskbar */
.taskbar { height: 27px; flex: none; display: flex; background: #04070b; color: #fff; }
.system, .apps, .tray { display: flex; align-items: stretch; }
.system button { width: 32px; }
.taskbar button { display: flex; align-items: center; justify-content: center; }
.taskbar .system svg, .apps svg { width: 17px; height: 17px; }
.apps { width: 457px; margin-left: 2px; }
.apps button { flex: 1; padding-top: 1px; margin: 0 2px; border-bottom: 2px solid transparent; }
.apps .run { border-color: #6fa9dc; }
.apps .active { background: #343c43; }
.ai-tile { width: 15px; height: 15px; border: 1px solid #e08427; color: #f3922c; background: #291100; font-size: 9px; font-weight: 600; line-height: 13px; }
.teams { position: relative; width: 13px; height: 12px; border-radius: 3px; background: #5961c3; font-size: 8px; font-weight: 700; line-height: 12px; padding-right: 3px; }
.teams::after { content: ""; position: absolute; right: -2px; top: -3px; width: 5px; height: 5px; border-radius: 50%; background: #7b83eb; }
.tray { margin-left: auto; align-items: center; border-right: 1px solid #333; margin-right: 2px; }
.tray button { width: 16px; }
.tray svg { width: 12px; height: 12px; }
.clock { width: 44px; text-align: center; margin-left: 1px; }
.tray .notif { width: 30px; padding-right: 3px; }
.tray .notif svg { width: 14px; height: 14px; }

/* Explorer windows */
.window { position: absolute; display: flex; flex-direction: column; background: #fff; border: 1px solid #bdbdbd; box-shadow: 0 1px 6px rgba(0, 0, 0, .35); }
.back { left: 511px; top: 11px; right: 16px; bottom: 137px; }
.front { left: 119px; top: 55px; right: 458px; bottom: 92px; border-color: #4092c8; box-shadow: 0 2px 10px rgba(0, 0, 0, .4); }
.titlebar { height: 20px; flex: none; display: flex; align-items: center; padding-left: 6px; }
.titlebar i { width: 1px; height: 8px; background: #aaa; margin: 0 5px; }
.titlebar .f + .f { margin-left: 5px; }
.titlebar .s6 { margin-left: 4px; }
.titlebar h2 { margin: 0; font-size: 8px; font-weight: 400; }
.controls { display: flex; gap: 20px; margin-left: auto; padding-right: 10px; color: #333; }
.back h2, .back .controls { color: #999; }
.tabs { height: 15px; flex: none; display: flex; color: #444; }
.tabs button { width: 38px; }
.tabs .filetab { width: 37px; background: #1474c4; color: #fff; }
.tabs .on { width: 39px; background: #f5f6f7; border: 1px solid #e4e5e6; border-bottom: 0; }
.help { display: flex; align-items: center; gap: 5px; margin-left: auto; padding-right: 2px; color: #888; }
.help b { width: 10px; height: 10px; border-radius: 50%; background: #0d66b5; color: #fff; text-align: center; line-height: 10px; }
.ribbon { height: 61px; flex: none; display: flex; background: #f4f6f7; border: 1px solid #e2e4e5; border-width: 1px 0; color: #333; }
.group { display: flex; flex-direction: column; border-right: 1px solid #e2e4e6; padding-left: 1px; }
.group p { margin: 0; text-align: center; color: #5f6368; line-height: 10px; }
.clip { width: 175px; }
.org { width: 127px; }
.new { width: 97px; }
.opn { width: 89px; }
.sel { width: 77px; }
.items { display: flex; height: 49px; padding-top: 2px; }
.items > i { width: 1px; height: 40px; background: #e0e2e4; }
.big { line-height: 9px; display: block; text-align: center; padding-top: 2px; align-self: flex-start; }
.big > svg:first-child { width: 22px; height: 22px; margin: 0 auto 2px; }
.big .s6 { display: inline-block; margin-left: 1px; }
.w49 { width: 49px; }
.w25 { width: 25px; }
.w30 { width: 30px; }
.w40 { width: 40px; }
.col { display: flex; flex-direction: column; padding-left: 1px; }
.new .col { padding-left: 2px; }
.sel .col { padding-left: 4px; }
.col button { display: flex; align-items: center; height: 15px; gap: 2px; }
.col button > svg:first-child { width: 11px; height: 11px; }
.off { color: #9a9a9a; }

.address { height: 24px; flex: none; display: flex; align-items: center; padding-right: 8px; }
.arrows { width: 71px; display: flex; align-items: center; gap: 6px; padding-left: 8px; color: #555; }
.arrows .off { color: #ccc; margin-left: 3px; }
.arrows .small { margin: 0 1px; }
.crumbs { flex: 1; height: 15px; display: flex; align-items: center; gap: 2px; padding-left: 2px; border: 1px solid #dadada; }
.crumbs .s10 { color: #666; }
.crumbs .drop { margin-left: auto; color: #444; }
.reload { align-self: stretch; width: 14px; padding-left: 2px; border-left: 1px solid #dadada; }
.find { width: 135px; height: 15px; display: flex; align-items: center; margin-left: 7px; padding: 0 4px 0 5px; border: 1px solid #dadada; color: #555; }
.find input { flex: 1; }
.find input::placeholder { color: #707070; opacity: 1; }
.back .tail { margin-left: 221px; }

.content { flex: 1; min-height: 0; display: flex; overflow: hidden; }
.nav { width: 218px; flex: none; list-style: none; margin: 0; padding: 0; overflow: hidden; }
.nav li { display: flex; align-items: center; gap: 2px; height: 16px; padding-left: 21px; white-space: nowrap; }
.nav li svg { width: 12px; height: 12px; }
.nav .deep { padding-left: 26px; }
.nav .root { padding-left: 16px; margin-top: 5px; }
.nav .current { background: #d9d9d9; }
.bar { width: 11px; flex: none; display: flex; flex-direction: column; align-items: center; background: #f0f0f0; color: #333; }
.track { flex: 1; align-self: stretch; display: flex; flex-direction: column; }
.track span { background: #cdcdcd; width: 10px; }
.tree-track { padding-top: 258px; }
.tree-track span { height: 104px; }
.file-track span { height: 370px; }
.list { flex: 1; min-width: 0; overflow: hidden; padding-left: 12px; }
.back .nav { width: 228px; }
table { table-layout: fixed; width: 384px; border-spacing: 0; }
.c-name { width: 172px; }
.c-date, .c-type { width: 80px; }
.c-size { width: 52px; }
thead::after { content: ""; display: block; height: 3px; }
th { position: relative; height: 18px; padding: 0 0 0 4px; font-weight: 400; text-align: left; color: #4c607a; border-right: 1px solid #e8e8e8; }
th:first-child { padding-left: 2px; }
.sort { position: absolute; left: 80px; top: -3px; color: #888; }
td { height: 14px; padding: 0 0 0 4px; color: #6d6d6d; line-height: 12px; white-space: nowrap; }
td:first-child { padding-left: 3px; color: #1c1c1c; }
td:last-child { padding: 0 4px 0 0; text-align: right; }
td svg { width: 11px; height: 11px; float: left; margin-right: 2px; }
.front .picked td { background: #cbe8f8; box-shadow: inset 0 1px #8ec7e8, inset 0 -1px #8ec7e8; }
.back .picked td { background: #d9d9d9; }
.status { height: 17px; flex: none; display: flex; align-items: center; gap: 14px; padding-left: 9px; color: #33507a; }
.views { display: flex; margin-left: auto; align-self: stretch; padding-right: 2px; }
.views button { width: 15px; display: flex; align-items: center; justify-content: center; }
.views svg { width: 11px; height: 11px; }
.views .on { background: #cce8f6; border: 1px solid #65b4d8; }
.cursor { position: absolute; left: 379px; top: 73px; width: 8px; height: 12px; }
```
